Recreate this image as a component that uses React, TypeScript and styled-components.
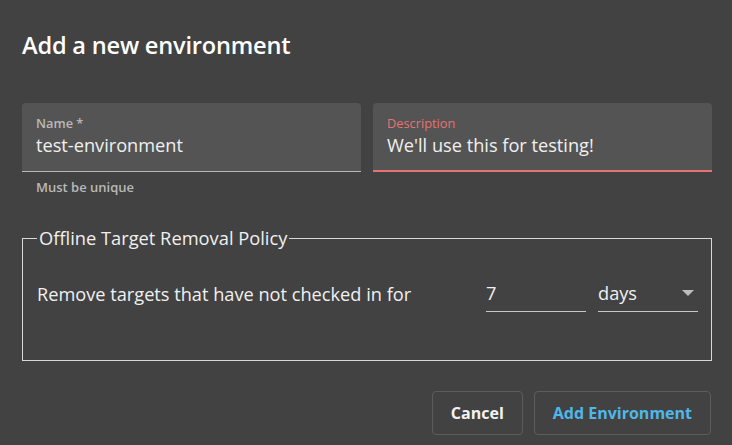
import React from "react";
import styled, { createGlobalStyle } from "styled-components";

const GlobalStyle = createGlobalStyle`
  html, body {
    margin: 0;
    padding: 0;
    background: #424242;
  }
  body {
    font-family: "Open Sans", "Noto Sans", sans-serif;
    color: #f2f2f2;
  }
`;

const Dialog = styled.div`
  width: 732px;
  height: 445px;
  box-sizing: border-box;
  padding: 29px 21px 0 22px;
  background: #424242;
`;

const Title = styled.h2`
  margin: 0;
  font-size: 23.6px;
  line-height: 33px;
  font-weight: 600;
  color: #ffffff;
  letter-spacing: -0.2px;
`;

const FieldRow = styled.div`
  display: grid;
  grid-template-columns: 339px 339px;
  gap: 12px;
  margin-top: 41px;
`;

const FieldColumn = styled.div`
  display: flex;
  flex-direction: column;
`;

const FilledField = styled.div<{ $focused?: boolean }>`
  height: 69px;
  box-sizing: border-box;
  padding: 12px 14px 0;
  background: #545454;
  border-radius: 4px 4px 0 0;
  border-bottom: ${(p) => (p.$focused ? "2px solid #e57373" : "1px solid #b8b8b8")};
`;

const FieldLabel = styled.div<{ $focused?: boolean }>`
  font-size: 12.8px;
  line-height: 17px;
  font-weight: ${(p) => (p.$focused ? 400 : 600)};
  color: ${(p) => (p.$focused ? "#e57373" : "#b9b9b9")};
`;

const FieldValue = styled.div`
  margin-top: 1px;
  font-size: 18.2px;
  line-height: 24px;
  font-weight: 500;
  color: #f0f0f0;
`;

const HelperText = styled.div`
  padding: 7px 14px 0;
  font-size: 13px;
  line-height: 16px;
  font-weight: 600;
  color: #b9b9b9;
`;

const PolicyBox = styled.fieldset`
  margin: 31px 0 0;
  width: 690px;
  height: 135px;
  box-sizing: border-box;
  padding: 0 13px 0 14px;
  border: 1px solid #d8d8d8;
`;

const Legend = styled.legend`
  padding: 0 2px;
  margin-left: 0;
  font-size: 18.3px;
  line-height: 24px;
  font-weight: 500;
  color: #f0f0f0;
`;

const PolicyRow = styled.div`
  display: flex;
  align-items: flex-end;
  margin-top: 31px;
`;

const PolicyText = styled.div`
  flex: 1;
  font-size: 18.2px;
  line-height: 24px;
  font-weight: 500;
  color: #f0f0f0;
  padding-bottom: 6px;
`;

const UnderlineInput = styled.div`
  width: 100px;
  box-sizing: border-box;
  padding-bottom: 6px;
  border-bottom: 1px solid #c8c8c8;
  font-size: 18.2px;
  line-height: 24px;
  font-weight: 500;
  color: #f0f0f0;
`;

const SelectBox = styled(UnderlineInput)`
  margin-left: 12px;
  display: flex;
  align-items: center;
  justify-content: space-between;
`;

const Arrow = styled.span`
  width: 0;
  height: 0;
  margin-right: 4px;
  border-left: 6px solid transparent;
  border-right: 6px solid transparent;
  border-top: 6px solid #bdbdbd;
`;

const Actions = styled.div`
  display: flex;
  justify-content: flex-end;
  gap: 11px;
  margin-top: 30px;
`;

const Button = styled.button<{ $primary?: boolean }>`
  height: 44px;
  box-sizing: border-box;
  padding: 0 18px;
  background: transparent;
  border: 1px solid #5c5c5c;
  border-radius: 4px;
  font-family: inherit;
  font-size: 16px;
  font-weight: 700;
  color: ${(p) => (p.$primary ? "#4fb7ea" : "#f2f2f2")};
  cursor: pointer;
`;

export default function App() {
  return (
    <>
      <GlobalStyle />
      <Dialog>
        <Title>Add a new environment</Title>
        <FieldRow>
          <FieldColumn>
            <FilledField>
              <FieldLabel>Name *</FieldLabel>
              <FieldValue>test-environment</FieldValue>
            </FilledField>
            <HelperText>Must be unique</HelperText>
          </FieldColumn>
          <FieldColumn>
            <FilledField $focused>
              <FieldLabel $focused>Description</FieldLabel>
              <FieldValue>We'll use this for testing!</FieldValue>
            </FilledField>
          </FieldColumn>
        </FieldRow>
        <PolicyBox>
          <Legend>Offline Target Removal Policy</Legend>
          <PolicyRow>
            <PolicyText>Remove targets that have not checked in for</PolicyText>
            <UnderlineInput>7</UnderlineInput>
            <SelectBox>
              days
              <Arrow />
            </SelectBox>
          </PolicyRow>
        </PolicyBox>
        <Actions>
          <Button>Cancel</Button>
          <Button $primary>Add Environment</Button>
        </Actions>
      </Dialog>
    </>
  );
}
